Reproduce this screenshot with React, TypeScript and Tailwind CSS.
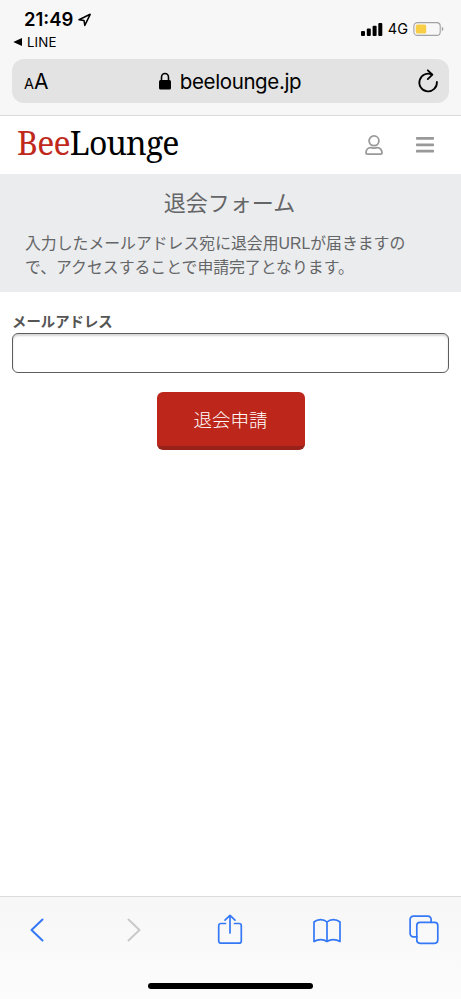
import type { ReactNode } from 'react';

function StatusBar() {
  return (
    <div className="flex h-[59px] justify-between">
      <div className="pl-3">
        <div className="flex items-center gap-[4px] pl-[12px] pt-[9px]">
          <span className="text-[18.5px] font-semibold leading-[21px]">21:49</span>
          <svg width="15" height="14" viewBox="0 0 15 14" fill="none" stroke="#000" strokeWidth="1.5" strokeLinejoin="round">
            <path d="M13.2 1.3 2 6.7 7 7.4 7.8 12.4Z" />
          </svg>
        </div>
        <div className="flex items-center gap-[5px] pl-[1px] pt-[5px]">
          <svg width="9" height="8" viewBox="0 0 9 8">
            <path d="M.3 4 9 0V8Z" />
          </svg>
          <span className="text-[13.3px] leading-[14px] tracking-[0.1px]">LINE</span>
        </div>
      </div>
      <div className="flex h-[57px] items-center pr-[17px]">
        <svg className="mr-[5px]" width="23" height="14" viewBox="0 0 23 14">
          <rect x="1" y="9" width="4" height="5" rx="1" />
          <rect x="6.8" y="6.6" width="4" height="7.4" rx="1" />
          <rect x="12.6" y="3.8" width="4" height="10.2" rx="1" />
          <rect x="18.3" y="1" width="4" height="13" rx="1" />
        </svg>
        <span className="mr-[5px] text-[14.5px] leading-[16px]">4G</span>
        <svg width="31" height="14" viewBox="0 0 31 14">
          <rect x=".9" y=".6" width="26.3" height="12.8" rx="3.5" fill="none" stroke="#a2a2a2" strokeWidth="1.1" />
          <rect x="2.8" y="2.4" width="10.4" height="9.2" rx="1.7" fill="#f7ce46" />
          <path d="M28.8 4.8c2 .7 2 3.7 0 4.4Z" fill="#a2a2a2" />
        </svg>
      </div>
    </div>
  );
}

function AddressBar() {
  return (
    <div className="mx-3 flex h-[44px] items-center justify-between rounded-[12px] bg-[#e3e3e3] pl-[12px] pr-[10px]">
      <div className="flex w-[40px] items-baseline pt-[2px]">
        <span className="text-[14.5px]">A</span>
        <span className="text-[21px]">A</span>
      </div>
      <div className="flex items-center gap-[9px] pr-[3px]">
        <svg width="12" height="18" viewBox="0 0 12 18">
          <rect x="0" y="8" width="12" height="9.5" rx="1.5" />
          <path d="M2.5 8.5V5.2a3.5 3.7 0 0 1 7 0v3.3" fill="none" stroke="#000" strokeWidth="1.6" />
        </svg>
        <span className="pt-px text-[20.5px] leading-[28px] tracking-[-0.38px]">beelounge.jp</span>
      </div>
      <div className="flex w-[40px] justify-end">
        <svg width="22" height="24" viewBox="0 0 22 24" fill="none" stroke="#000" strokeWidth="1.8" strokeLinecap="round" strokeLinejoin="round">
          <path d="M19.9 13A8.8 8.800 0 1 1 14.900 5.600" />
          <path d="m10.800 1.300 4.600 4.300-4.600 4.500" />
        </svg>
      </div>
    </div>
  );
}

function SiteHeader() {
  return (
    <header className="flex h-[58px] items-center justify-between bg-white pl-[17px] pr-[27px]">
      <h1 className="pb-[5px] font-['Noto_Serif','Liberation_Serif',serif] text-[32px] leading-[40px] tracking-[-0.8px]">
        <span className="text-[#c0281c]">Bee</span>Lounge
      </h1>
      <div className="flex items-center gap-[33px]">
        <svg width="18" height="20" viewBox="0 0 18 20" fill="none" stroke="#999" strokeWidth="1.8">
          <circle cx="9" cy="5.8" r="4.9" />
          <path d="M2.2 19.1h13.6c.8 0 1.2-.5 1.2-1.2 0-3.4-2-5.2-4.7-5.2-1.1 0-1.7.5-3.3.5s-2.2-.5-3.3-.5C3 12.7 1 14.5 1 17.9c0 .7.4 1.2 1.2 1.2Z" />
        </svg>
        <svg width="18" height="16" viewBox="0 0 18 16" fill="#999">
          <rect y="0" width="18" height="2.8" rx=".7" />
          <rect y="6.4" width="18" height="2.8" rx=".7" />
          <rect y="12.8" width="18" height="2.8" rx=".7" />
        </svg>
      </div>
    </header>
  );
}

function WithdrawalForm() {
  return (
    <main className="flex-1 bg-white font-['Liberation_Sans','Noto_Sans_CJK_JP',sans-serif] text-[#646566]">
      <section className="h-[118px] bg-[#ebecee] px-[25px] pt-[14px]">
        <h2 className="-ml-[2px] text-center text-[22px] leading-[32px]">退会フォーム</h2>
        <p className="mt-[12px] whitespace-nowrap text-[15.85px] leading-[23.5px]">
          入力したメールアドレス宛に退会用URLが届きますの
          <br />
          で、アクセスすることで申請完了となります。
        </p>
      </section>
      <form className="px-3 pt-[20px]" onSubmit={(e) => e.preventDefault()}>
        <label htmlFor="email" className="block text-[14.4px] font-bold leading-[21px] text-[#555]">
          メールアドレス
        </label>
        <input
          id="email"
          type="email"
          className="block h-[40px] w-full rounded-[6px] border border-[#5d5d5d] bg-white px-3 shadow-[inset_0_2px_2px_rgba(0,0,0,0.16)]"
        />
        <button
          type="submit"
          className="mx-auto mt-[19px] block h-[58px] w-[148px] rounded-[6px] border-b-[4px] border-[#96221a] bg-[#bd271b] pt-[4px] text-[18.5px] font-light text-white"
        >
          退会申請
        </button>
      </form>
    </main>
  );
}

function ToolbarIcon({ width = 28, color = '#3478f6', children }: { width?: number; color?: string; children: ReactNode }) {
  return (
    <svg
      width={width}
      height="32"
      viewBox={`0 0 ${width} 32`}
      fill="none"
      stroke={color}
      strokeWidth="1.7"
      strokeLinecap="round"
      strokeLinejoin="round"
    >
      {children}
    </svg>
  );
}

function Toolbar() {
  return (
    <footer className="flex h-[103px] flex-col items-center justify-between border-t border-[#dcdcdc] bg-gradient-to-b from-[#f7f7f7] to-[#fcfcfc] pb-[10px] pt-[17px]">
      <div className="flex w-full justify-between pl-[23px] pr-[22px]">
        <ToolbarIcon>
          <path d="M19.5 5.5 8.5 16 19.5 26.5" strokeWidth="2" />
        </ToolbarIcon>
        <ToolbarIcon color="#c9c9c9">
          <path d="m8.5 5.5 11 10.5-11 10.5" strokeWidth="2" />
        </ToolbarIcon>
        <ToolbarIcon>
          <path d="M9.500 9.500H5a2.300 2.300 0 0 0-2.300 2.300v15.100A2.300 2.300 0 0 0 5 29.200h18a2.300 2.300 0 0 0 2.300-2.300V11.800A2.300 2.300 0 0 0 23 9.500h-4.500" />
          <path d="M14 19V1.500M9 6.200l5-4.900 5 4.900" />
        </ToolbarIcon>
        <ToolbarIcon>
          <path d="M14 27.500c-3.400-2.500-9-2.500-13 0V8c3.700-3.200 9.600-3.200 13 0 3.400-3.200 9.300-3.200 13 0v19.500c-4-2.500-9.600-2.500-13 0ZM14 8v19.500" />
        </ToolbarIcon>
        <ToolbarIcon width={30}>
          <path d="M7.800 22.800H4.300A3.200 3.200 0 0 1 1.100 19.600V5.300a3.200 3.200 0 0 1 3.200-3.200h14.600a3.200 3.200 0 0 1 3.200 3.200v3" />
          <rect x="7.800" y="8.300" width="21" height="21" rx="3.200" />
        </ToolbarIcon>
      </div>
      <div className="h-[6px] w-[165px] rounded-full bg-black" />
    </footer>
  );
}

export default function App() {
  return (
    <div className="flex h-[999px] w-[461px] flex-col overflow-hidden bg-[#f7f7f7] font-['Inter','Liberation_Sans',sans-serif] text-black">
      <div className="h-[116px] shrink-0 border-b border-[#dcdcdc]">
        <StatusBar />
        <AddressBar />
      </div>
      <SiteHeader />
      <WithdrawalForm />
      <Toolbar />
    </div>
  );
}
